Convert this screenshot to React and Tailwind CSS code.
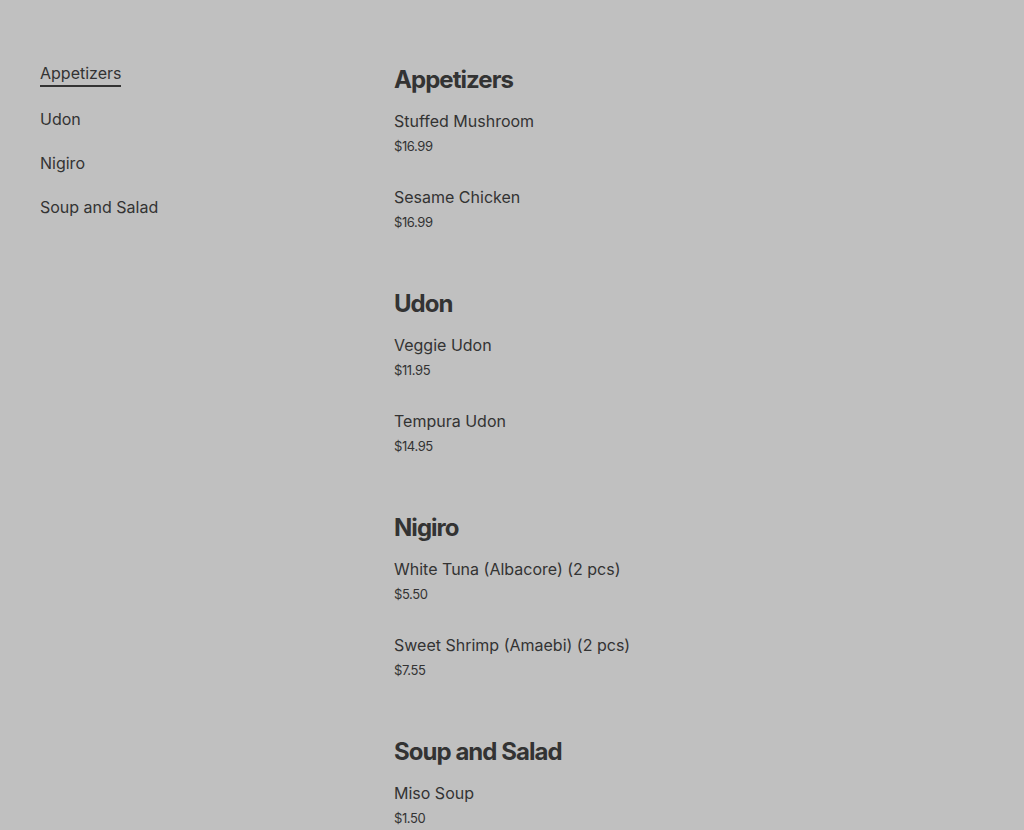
import React from 'react';

const menu = [
  {
    name: 'Appetizers',
    items: [
      { name: 'Stuffed Mushroom', price: '$16.99' },
      { name: 'Sesame Chicken', price: '$16.99' },
    ],
  },
  {
    name: 'Udon',
    items: [
      { name: 'Veggie Udon', price: '$11.95' },
      { name: 'Tempura Udon', price: '$14.95' },
    ],
  },
  {
    name: 'Nigiro',
    items: [
      { name: 'White Tuna (Albacore) (2 pcs)', price: '$5.50' },
      { name: 'Sweet Shrimp (Amaebi) (2 pcs)', price: '$7.55' },
    ],
  },
  {
    name: 'Soup and Salad',
    items: [{ name: 'Miso Soup', price: '$1.50' }],
  },
];

const App = () => {
  const active = 'Appetizers';

  return (
    <div
      className="min-h-[830px] bg-[#c0c0c0] text-[#333333] px-10 pt-[61px] pb-10"
      style={{ fontFamily: 'Inter, "Noto Sans", sans-serif' }}
    >
      <div className="flex">
        <nav className="w-[354px] shrink-0">
          <ul className="flex flex-col gap-5 items-start">
            {menu.map((section) => (
              <li key={section.name}>
                <a
                  href="#"
                  className={
                    section.name === active
                      ? 'block text-base leading-6 border-b-2 border-[#333333]'
                      : 'block text-base leading-6'
                  }
                >
                  {section.name}
                </a>
              </li>
            ))}
          </ul>
        </nav>

        <main className="flex-1 pt-[3px] flex flex-col gap-[56px]">
          {menu.map((section) => (
            <section key={section.name}>
              <h2 className="text-2xl leading-8 font-bold tracking-[-0.04em]">{section.name}</h2>
              <div className="mt-[13px] flex flex-col gap-[29px]">
                {section.items.map((item) => (
                  <div key={item.name}>
                    <h3 className="text-base leading-6 font-normal">{item.name}</h3>
                    <p className="mt-[3px] text-[13px] leading-5 tracking-[-0.03em]">{item.price}</p>
                  </div>
                ))}
              </div>
            </section>
          ))}
        </main>
      </div>
    </div>
  );
};

export default App;
